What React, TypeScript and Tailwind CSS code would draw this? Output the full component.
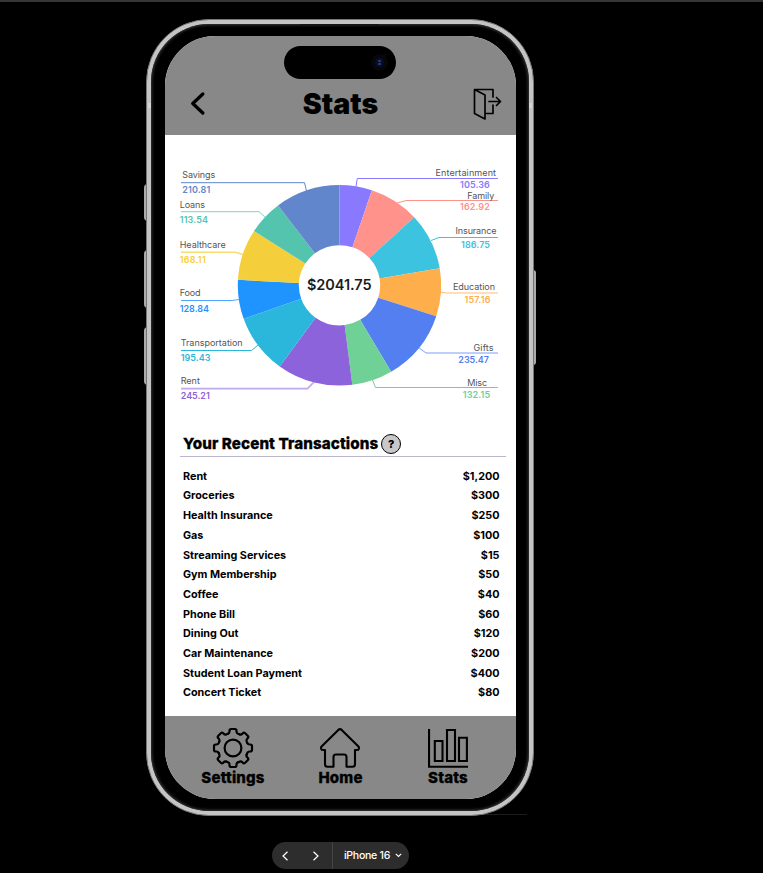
import React from "react";

type Slice = {
  name: string;
  value: number;
  color: string;
  line: string;
  lineWidth?: number;
  lineOpacity?: number;
  label: [number, number, number];
  amount: [number, number, number];
};

const slices: Slice[] = [
  { name: "Entertainment", value: 105.36, color: "#8979ff", line: "M356 186.500L357.300 178.500H498", label: [435.500, 176.300, 60.500], amount: [460, 188.300, 29.800] },
  { name: "Family", value: 162.92, color: "#ff928a", line: "M397 203L406 200.500H498", label: [467.300, 198.700, 27], amount: [460, 210.100, 29.800] },
  { name: "Insurance", value: 186.75, color: "#3cc3df", line: "M431 240.500L439 237.500H498", label: [455.500, 233.800, 41], amount: [461, 247.500, 29] },
  { name: "Education", value: 157.16, color: "#ffae4c", line: "M441 292.300L447 293H498", label: [453, 290, 42], amount: [464.500, 302.800, 26], lineOpacity: 0.8 },
  { name: "Gifts", value: 235.47, color: "#537ff1", line: "M418 347L426 353H498", label: [473.500, 351, 20], amount: [458.300, 362.800, 30.700], lineOpacity: 0.75 },
  { name: "Misc", value: 132.15, color: "#6fd195", line: "M372.500 380L375.500 387.500H498", label: [467.200, 386, 20], amount: [462.700, 397.500, 27.500] },
  { name: "Rent", value: 245.21, color: "#8c63da", line: "M314 382L307.500 388.700H181", label: [180.700, 383.900, 19.200], amount: [180.700, 399.300, 29], lineWidth: 1.7, lineOpacity: 0.55 },
  { name: "Transportation", value: 195.43, color: "#2bb7dc", line: "M258 345L251.500 350.500H181", label: [180.700, 345.600, 62], amount: [180.700, 360.900, 29.800] },
  { name: "Food", value: 128.84, color: "#1f94ff", line: "M239 299.500L232 300.500H181", label: [179.700, 296.200, 20.700], amount: [179.700, 311.700, 29.300], lineOpacity: 0.8 },
  { name: "Healthcare", value: 168.11, color: "#f4cf3b", line: "M243 254.500L235.500 252.200H181", label: [179.700, 248, 46], amount: [179.700, 263, 26], lineWidth: 1.500, lineOpacity: 0.7 },
  { name: "Loans", value: 113.54, color: "#55c4ae", line: "M265 217L259 211.700H181", label: [179.700, 207.500, 25.300], amount: [179.700, 222.800, 28.300], lineOpacity: 0.75 },
  { name: "Savings", value: 210.81, color: "#6186cc", line: "M306.500 191L304.500 182.700H181", label: [182.300, 178, 33], amount: [182.300, 193.400, 28] },
];

const total = slices.reduce((sum, s) => sum + s.value, 0);
const CX = 339.5;
const CY = 285.3;

function point(fraction: number, scale: number) {
  const a = fraction * Math.PI * 2;
  return `${(CX + Math.sin(a) * 101.7 * scale).toFixed(2)} ${(CY - Math.cos(a) * 100.3 * scale).toFixed(2)}`;
}

function SpendingChart() {
  let run = 0;
  return (
    <svg viewBox="165 135 351 285" className="block h-[285px] w-[351px]" fontFamily="Inter, sans-serif">
      {slices.map((s) => {
        const a = run / total;
        run += s.value;
        const b = run / total;
        return (
          <g key={s.name}>
            <path d={s.line} fill="none" stroke={s.color} strokeWidth={s.lineWidth ?? 1} opacity={s.lineOpacity ?? 1} />
            <path
              fill={s.color}
              d={`M${point(a, 0.4)}L${point(a, 1)}A101.7 100.3 0 0 1 ${point(b, 1)}L${point(b, 0.4)}A40.7 40.1 0 0 0 ${point(a, 0.4)}Z`}
            />
            <text x={s.label[0]} y={s.label[1]} textLength={s.label[2]} fontSize="9" fill="#555">{s.name}</text>
            <text x={s.amount[0]} y={s.amount[1]} textLength={s.amount[2]} fontSize="9" fontWeight="600" fill={s.color}>{s.value}</text>
          </g>
        );
      })}
      <text x="307" y="290" textLength="64.500" fontSize="14.500" fontWeight="600" fill="#1c1c1c">$2041.75</text>
    </svg>
  );
}

const transactions = [
  ["Rent", "$1,200"],
  ["Groceries", "$300"],
  ["Health Insurance", "$250"],
  ["Gas", "$100"],
  ["Streaming Services", "$15"],
  ["Gym Membership", "$50"],
  ["Coffee", "$40"],
  ["Phone Bill", "$60"],
  ["Dining Out", "$120"],
  ["Car Maintenance", "$200"],
  ["Student Loan Payment", "$400"],
  ["Concert Ticket", "$80"],
];

function GearIcon() {
  const tooth =
    "M-5-14.300Q-3.500-15-3.500-16.500V-17.300Q-3.500-19-1.800-19H1.800Q3.500-19 3.500-17.300V-16.500Q3.500-15 5-14.300Q6.100-13.900 6.600-13.600";
  return (
    <svg viewBox="-20 -20 40 40" className="block h-10 w-10 overflow-visible" fill="none" stroke="#000" strokeWidth="2.2" strokeLinejoin="round" strokeLinecap="round">
      <circle r="8.4" />
      {[0, 45, 90, 135, 180, 225, 270, 315].map((r) => (
        <path key={r} d={tooth} transform={`rotate(${r})`} />
      ))}
    </svg>
  );
}

function HomeIcon() {
  return (
    <svg viewBox="0 0 40 40" className="mr-px block h-10 w-10" fill="none" stroke="#000" strokeWidth="2.1" strokeLinejoin="round" strokeLinecap="round">
      <path d="M18.300 1.900Q20 .5 21.700 1.900L38.200 18.200Q39.300 19.500 38.800 20.800Q38.300 22 37 22H35V36.300Q35 38.800 32.500 38.800H26.500V29Q26.500 26.500 24 26.500H16Q13.500 26.500 13.500 29V38.800H7.500Q5 38.800 5 36.300V22H3Q1.700 22 1.200 20.800Q.7 19.500 1.800 18.200Z" />
    </svg>
  );
}

function StatsIcon() {
  return (
    <svg viewBox="0 0 40 40" className="block h-10 w-10" fill="none" stroke="#000" strokeWidth="2.1">
      <path d="M1.050 1V38.800H40M6.800 13H14.500V33H6.800ZM19 2H27V33H19ZM31 9.700H38.900V33H31Z" />
    </svg>
  );
}

function Tab({ label, children }: { label: string; children: React.ReactNode }) {
  return (
    <div className="flex w-[107.5px] flex-col items-center">
      {children}
      <span className="mt-px text-[15px] font-extrabold leading-[18px] tracking-[0.2px] [-webkit-text-stroke:0.3px_black]">{label}</span>
    </div>
  );
}

export default function App() {
  return (
    <div className="h-[873px] w-[763px] overflow-hidden bg-black font-['Inter',sans-serif] text-black">
      <div className="h-[2px] bg-[#353535]" />
      <div className="relative ml-[146px] mt-[17px] h-[797px] w-[388px]">
        <div className="absolute -left-[2px] top-[165px] h-[37px] w-[4px] rounded-l-sm bg-[#aaa]" />
        <div className="absolute -left-[2px] top-[231px] h-[58px] w-[4px] rounded-l-sm bg-[#aaa]" />
        <div className="absolute -left-[2px] top-[308px] h-[58px] w-[4px] rounded-l-sm bg-[#aaa]" />
        <div className="absolute -right-[2px] top-[251px] h-[95px] w-[3px] rounded-r-sm bg-[#aaa]" />
        <div className="absolute bottom-px right-[7px] h-px w-[56px] bg-[#1c1c1c]" />
        <div className="relative h-full rounded-[63px] border border-[#777] bg-[#c4c4c4] p-[4px]">
          <div className="absolute left-px top-[83px] h-[5px] w-[3px] bg-[#d4d4d4]" />
          <div className="absolute right-px top-[83px] h-[5px] w-[3px] bg-[#d4d4d4]" />
          <div className="h-full rounded-[58px] bg-black px-[14px] pt-[12px] shadow-[inset_0_0_3px_1px_#3c3c3c]">
            <div className="absolute left-[153px] top-[4px] h-[2px] w-[79px] rounded-b bg-[#161616]" />
            <div className="flex h-[762.5px] w-[351px] flex-col overflow-hidden rounded-[50px] bg-white">
              <header className="h-[99px] shrink-0 bg-[#888] pt-[10px]">
                <div className="ml-[119px] flex h-[33px] w-[112px] items-center justify-end rounded-full bg-black pr-[8px]">
                  <div className="flex h-[17px] w-[17px] items-center justify-center rounded-full bg-[#07060a]">
                    <div className="flex h-[9px] w-[9px] flex-col items-center justify-center gap-px rounded-full bg-[#090d27]">
                      <i className="h-[2px] w-[3px] rounded-full bg-[#243f83]" />
                      <i className="h-[2px] w-[3px] rounded-full bg-[#243f83]" />
                    </div>
                  </div>
                </div>
                <div className="mt-[6px] flex h-[36px] items-center justify-between pl-[25px] pr-[14px]">
                  <svg viewBox="0 0 16 24" className="h-6 w-4" fill="none" stroke="#000" strokeWidth="3.3" strokeLinecap="round" strokeLinejoin="round">
                    <path d="M12.800 3L2.800 12.500L12.800 22" />
                  </svg>
                  <h1 className="ml-[3px] mt-[2px] text-[28.5px] font-black leading-none">Stats</h1>
                  <svg viewBox="0 0 30 34" className="mt-[2px] h-[34px] w-[30px]" fill="none" stroke="#000" strokeWidth="1.700" strokeLinejoin="round" strokeLinecap="round">
                    <path d="M2.500 2.500H21V10M21 18V26.500H13.500M2.500 2.500L13 8V32L2.500 26.500ZM17 14.500H28M24.500 10.500L28.500 14.500L24.500 18.500" />
                  </svg>
                </div>
              </header>
              <main className="h-[581px] shrink-0">
                <SpendingChart />
                <section>
                  <div className="ml-[15px] mr-[10px] flex h-[37px] items-center border-b border-[#b9b7cb] pl-[3px] pt-[12px]">
                    <h2 className="whitespace-nowrap text-[15.2px] font-extrabold tracking-[0.1px] [-webkit-text-stroke:0.3px_black]">Your Recent Transactions</h2>
                    <span className="ml-[3px] flex h-5 w-5 items-center justify-center rounded-full border-[1.5px] border-black bg-[#c8c8c8] text-[11px] font-extrabold">?</span>
                  </div>
                  <ul className="mt-[10px] pl-[18px] pr-[16.500px]">
                    {transactions.map(([name, amount]) => (
                      <li key={name} className="flex h-[19.7px] items-center justify-between text-[10.8px] font-bold">
                        <span>{name}</span>
                        <span>{amount}</span>
                      </li>
                    ))}
                  </ul>
                </section>
              </main>
              <nav className="flex h-[83px] shrink-0 justify-center bg-[#888] pt-[12px]">
                <Tab label="Settings"><GearIcon /></Tab>
                <Tab label="Home"><HomeIcon /></Tab>
                <Tab label="Stats"><StatsIcon /></Tab>
              </nav>
            </div>
          </div>
        </div>
      </div>
      <div className="ml-[272px] mt-[26px] flex h-[27px] w-[137px] items-center rounded-full bg-[#2d2d2d] text-white">
        <div className="flex h-full w-[61px] items-center justify-between border-r border-[#454545] pl-[10px] pr-[13px]">
          <svg viewBox="0 0 6 10" className="h-[10px] w-[6px]" fill="none" stroke="currentColor" strokeWidth="1.2"><path d="M5.500 .7L1 5L5.500 9.300" /></svg>
          <svg viewBox="0 0 6 10" className="h-[10px] w-[6px]" fill="none" stroke="currentColor" strokeWidth="1.2"><path d="M.5 .7L5 5L.5 9.300" /></svg>
        </div>
        <span className="ml-[11px] mt-px whitespace-nowrap text-[10.6px] font-medium tracking-[-0.3px]">iPhone 16</span>
        <svg viewBox="0 0 7 5" className="ml-[5px] h-[5px] w-[7px]" fill="none" stroke="currentColor" strokeWidth="1.1"><path d="M.8 .8L3.500 3.500L6.200 .8" /></svg>
      </div>
    </div>
  );
}
